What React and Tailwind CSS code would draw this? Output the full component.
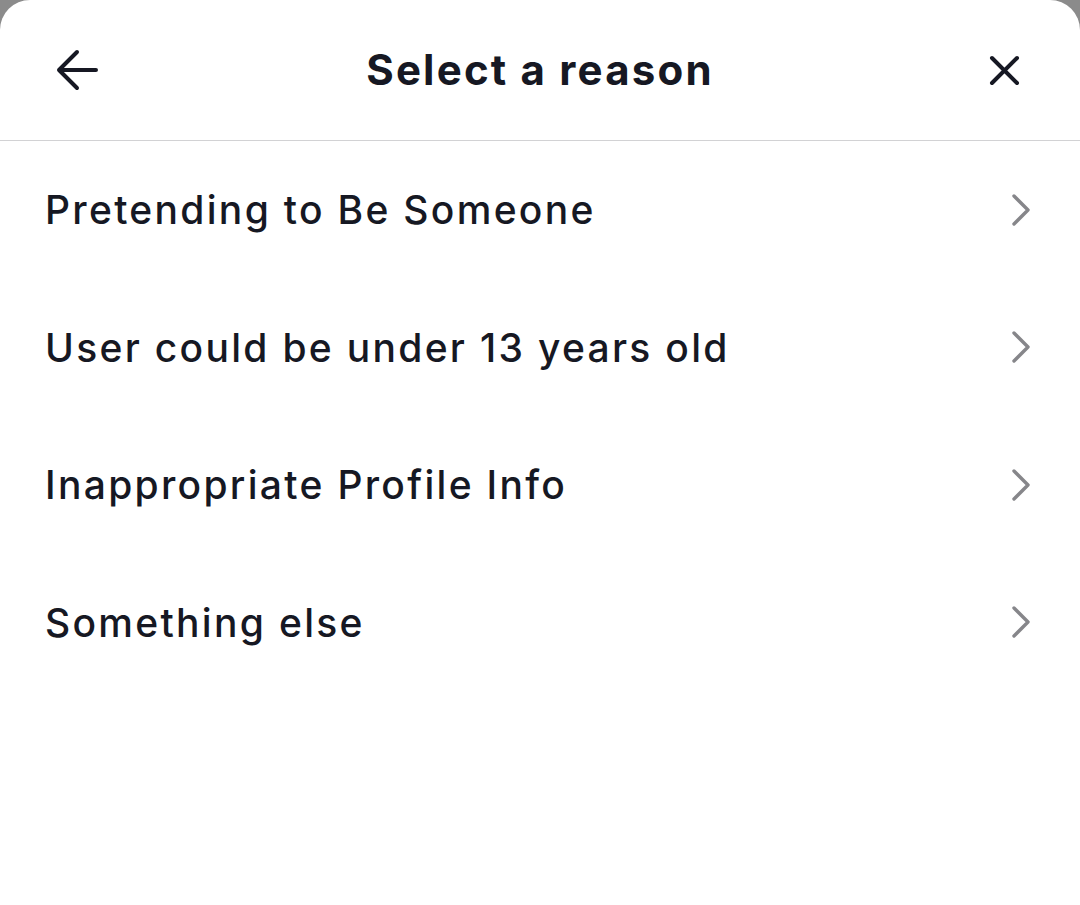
import React from "react";

const items = [
  "Pretending to Be Someone",
  "User could be under 13 years old",
  "Inappropriate Profile Info",
  "Something else",
];

function Chevron() {
  return (
    <svg width="24" height="34" viewBox="0 0 24 34" fill="none">
      <path d="M4 3 L18 17 L4 31" stroke="#86868a" strokeWidth="3.4" strokeLinecap="round" strokeLinejoin="round" />
    </svg>
  );
}

export default function App() {
  return (
    <div className="w-[1080px] h-[905px] bg-[#8b8b8b]" style={{ fontFamily: "Inter, 'Noto Sans', sans-serif" }}>
      <div className="h-full bg-white rounded-t-[30px] flex flex-col text-[#161823]">
        <div className="h-[141px] border-b border-[#d2d2d4] grid grid-cols-[1fr_auto_1fr] items-center px-[56px] shrink-0">
          <div className="flex">
            <svg width="44" height="44" viewBox="0 0 44 44" fill="none">
              <path d="M21 4 L3 22 L21 40 M3 22 H40" stroke="#161823" strokeWidth="4" strokeLinecap="round" strokeLinejoin="round" />
            </svg>
          </div>
          <div className="text-[42px] font-bold leading-none tracking-[2.2px]">Select a reason</div>
          <div className="flex justify-end pr-[4px]">
            <svg width="31" height="31" viewBox="0 0 31 31" fill="none">
              <path d="M3 3 L28 28 M28 3 L3 28" stroke="#161823" strokeWidth="4" strokeLinecap="round" />
            </svg>
          </div>
        </div>
        <div className="flex flex-col">
          {items.map((t) => (
            <div key={t} className="h-[137.5px] flex items-center justify-between pl-[45px] pr-[46px]">
              <span className="text-[39px] font-medium leading-none tracking-[2.3px]">{t}</span>
              <Chevron />
            </div>
          ))}
        </div>
      </div>
    </div>
  );
}
